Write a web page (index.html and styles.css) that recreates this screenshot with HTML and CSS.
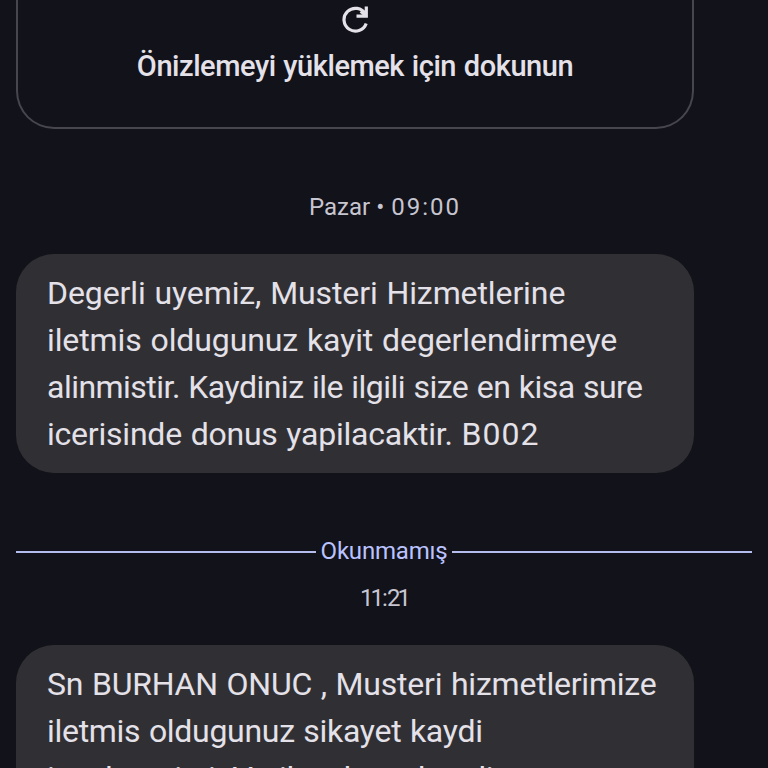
FILE: index.html
```html
<!DOCTYPE html>
<html lang="tr">
  <head>
    <meta charset="UTF-8" />
    <meta name="viewport" content="width=device-width, initial-scale=1.0" />
    <title>Mesajlar</title>
    <link rel="stylesheet" href="styles.css">
  </head>
  <body>
    <div class="chat">
      <!-- link preview -->
      <div class="preview">
        <svg class="preview-icon" viewBox="0 0 30 30">
          <path d="M26.2 19.4A11.4 11.4 0 1 1 25.4 10.2" />
          <path d="M26.3 2.6V12.2H16.5" />
          <path d="M20.8 7.2L26 12" />
        </svg>
        <p class="preview-text">Önizlemeyi yüklemek için dokunun</p>
      </div>

      <p class="time time-day">Pazar • <span class="hour">09:00</span></p>

      <!-- message 1 -->
      <div class="bubble">
        <p class="line">Degerli uyemiz, Musteri Hizmetlerine</p>
        <p class="line">iletmis oldugunuz kayit degerlendirmeye</p>
        <p class="line line-tight">alinmistir. Kaydiniz ile ilgili size en kisa sure</p>
        <p class="line line-snug">icerisinde donus yapilacaktir. <span class="code">B002</span></p>
      </div>

      <!-- unread divider -->
      <div class="unread">
        <span class="unread-text">Okunmamış</span>
      </div>

      <p class="time time-unread">11<span class="colon">:</span>21</p>

      <!-- message 2 -->
      <div class="bubble">
        <p class="line line-snug">Sn BURHAN ONUC , Musteri hizmetlerimize</p>
        <p class="line line-close">iletmis oldugunuz sikayet kaydi</p>
        <p class="line line-close">incelenmisti. Verilecek sozlu edi</p>
      </div>
    </div>
  </body>
</html>
```

FILE: styles.css
```css
* {
  box-sizing: border-box;
}

body {
  margin: 0;
  background-color: #12121a;
  font-family: "Roboto", "Liberation Sans", sans-serif;
}

p {
  margin: 0;
}

.chat {
  height: 768px;
  padding: 0 16px;
  overflow: hidden;
  color: #e4e1e9;
}

.preview {
  display: flex;
  flex-direction: column;
  align-items: center;
  width: 678px;
  height: 129px;
  padding-top: 4px;
  border: 2px solid #47464f;
  border-top: none;
  border-radius: 0 0 38px 38px;
}

.preview-icon {
  width: 30px;
  height: 30px;
  fill: none;
  stroke: #e4e1e9;
  stroke-width: 3.2;
}

.preview-text {
  margin-top: 14px;
  font-size: 29px;
  font-weight: 500;
  line-height: 36px;
  letter-spacing: -0.45px;
  word-spacing: 1px;
  white-space: nowrap;
}

.time {
  color: #c7c5d0;
  font-size: 24px;
  line-height: 30px;
  text-align: center;
}

.time-day {
  margin: 63px 0 32px;
}

.hour {
  margin: 0 -2px 0 1px;
  letter-spacing: 2px;
}

.bubble {
  width: 678px;
  height: 219px;
  padding: 16px 31px;
  border-radius: 38px;
  background-color: #303034;
}

.line {
  font-size: 32px;
  line-height: 47px;
  letter-spacing: -0.1px;
  word-spacing: 1px;
  white-space: nowrap;
}

.line-tight {
  letter-spacing: -0.52px;
}

.line-close {
  letter-spacing: -0.3px;
}

.line-snug {
  letter-spacing: -0.22px;
}

.code {
  letter-spacing: 1px;
}

.unread {
  display: flex;
  align-items: center;
  gap: 5px;
  height: 30px;
  margin-top: 63px;
  color: #bac3ff;
  font-size: 24px;
}

.unread-text {
  letter-spacing: -0.2px;
}

.unread::before,
.unread::after {
  content: "";
  flex: 1;
  height: 2px;
  margin-top: 2px;
  background-color: #b4bdee;
}

.time-unread {
  margin: 17px 0 32px;
  letter-spacing: -2.9px;
}

.colon {
  margin: 0 1px;
  letter-spacing: -2px;
}
```
